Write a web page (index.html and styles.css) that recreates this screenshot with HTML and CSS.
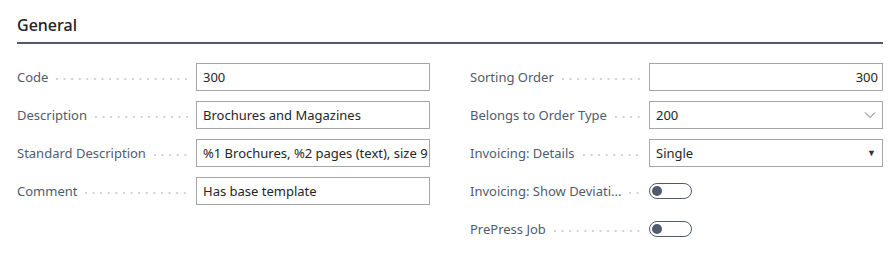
FILE: index.html
```html
<!DOCTYPE html>
<html lang="en">
<head>
    <meta charset="UTF-8">
    <title>General</title>
    <link rel="stylesheet" href="styles.css">
</head>
<body>
    <div class="card">
        <h2 class="section-title">General</h2>

        <div class="columns">
            <!-- Left column -->
            <div class="column">
                <div class="field">
                    <div class="caption"><span>Code</span><i class="leader"></i></div>
                    <div class="box">300</div>
                </div>
                <div class="field">
                    <div class="caption"><span>Description</span><i class="leader"></i></div>
                    <div class="box">Brochures and Magazines</div>
                </div>
                <div class="field">
                    <div class="caption"><span>Standard Description</span><i class="leader"></i></div>
                    <div class="box clipped">%1 Brochures, %2 pages (text), size 9</div>
                </div>
                <div class="field">
                    <div class="caption"><span>Comment</span><i class="leader"></i></div>
                    <div class="box">Has base template</div>
                </div>
            </div>

            <!-- Right column -->
            <div class="column">
                <div class="field">
                    <div class="caption"><span>Sorting Order</span><i class="leader"></i></div>
                    <div class="box number">300</div>
                </div>
                <div class="field">
                    <div class="caption"><span>Belongs to Order Type</span><i class="leader"></i></div>
                    <div class="box lookup">
                        <span>200</span>
                        <svg class="chevron" width="12" height="8" viewBox="0 0 12 8"><path d="M1 1.5 L6 6.5 L11 1.5" fill="none" stroke="#6b6b6b" stroke-width="1"/></svg>
                    </div>
                </div>
                <div class="field">
                    <div class="caption"><span>Invoicing: Details</span><i class="leader"></i></div>
                    <div class="box lookup">
                        <span>Single</span>
                        <span class="caret">&#9660;</span>
                    </div>
                </div>
                <div class="field">
                    <div class="caption"><span>Invoicing: Show Deviati...</span><i class="leader"></i></div>
                    <div class="toggle"><span class="knob"></span></div>
                </div>
                <div class="field">
                    <div class="caption"><span>PrePress Job</span><i class="leader"></i></div>
                    <div class="toggle"><span class="knob"></span></div>
                </div>
            </div>
        </div>
    </div>
</body>
</html>
```

FILE: styles.css
```css
/* Page */
body {
    margin: 0;
    background-color: #fff;
    font-family: "Noto Sans", "Open Sans", sans-serif;
    color: #212121;
}
.card {
    padding: 14px 11px 0 17px;
}
/* Section heading with underline */
.section-title {
    margin: 0;
    padding-bottom: 6px;
    font-size: 16px;
    font-weight: 500;
    line-height: 22px;
    color: #212121;
    border-bottom: 2px solid #505c6d;
}
.columns {
    display: flex;
    gap: 40px;
    padding-top: 19px;
}
.column {
    display: flex;
    flex-direction: column;
    gap: 10px;
}
/* Label + control row */
.field {
    display: flex;
    align-items: center;
    height: 28px;
}
.caption {
    display: flex;
    align-items: center;
    width: 179px;
    font-size: 13px;
    color: #505c6d;
    white-space: nowrap;
}
.leader {
    flex: 1;
    height: 2px;
    margin: 3px 8px 0 8px;
    background-image: linear-gradient(to right, #d2d2d2 2px, transparent 2px);
    background-size: 7.6px 2px;
    background-repeat: repeat-x;
}
.box {
    box-sizing: border-box;
    width: 234px;
    height: 28px;
    padding: 0 6px;
    border: 1px solid #a6a6a6;
    font-size: 13px;
    line-height: 26px;
    color: #262626;
    white-space: nowrap;
    overflow: hidden;
}
.clipped {
    text-overflow: clip;
}
.number {
    text-align: right;
    padding-right: 4px;
}
.lookup {
    display: flex;
    align-items: center;
    justify-content: space-between;
    padding-right: 6px;
}
.chevron {
    display: block;
}
.caret {
    font-size: 9px;
    color: #333;
}
/* Toggle switch (off) */
.toggle {
    box-sizing: border-box;
    width: 43px;
    height: 16px;
    border: 1px solid #505c6d;
    border-radius: 8px;
    display: flex;
    align-items: center;
    padding-left: 2px;
}
.knob {
    width: 10px;
    height: 10px;
    border-radius: 50%;
    background-color: #505c6d;
}
```
